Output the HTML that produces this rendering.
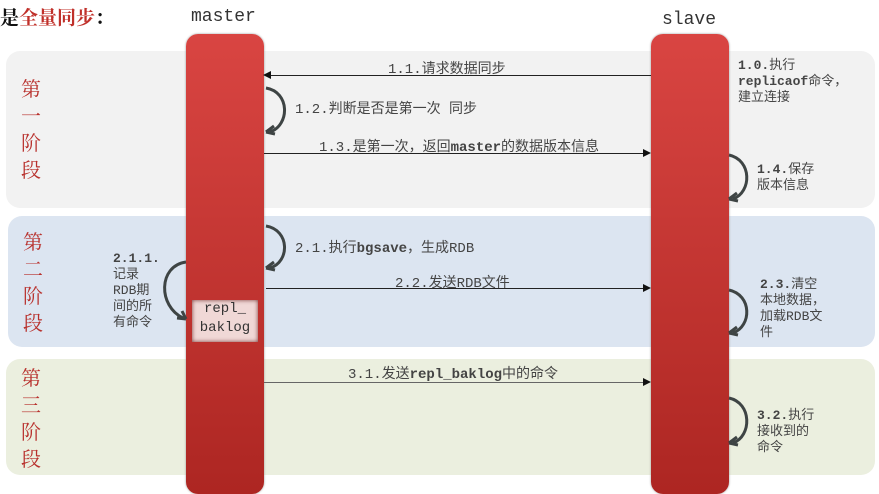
<!DOCTYPE html>
<html><head><meta charset="utf-8"><style>
body{margin:0;width:879px;height:482px;background:#fff;position:relative;overflow:hidden;font-family:"Liberation Mono","Noto Sans CJK SC",monospace;color:#444}
.a{position:absolute;white-space:nowrap}
.p{position:absolute;border-radius:14px}
.bar{position:absolute;top:34px;width:78px;height:460px;border-radius:12px;background:linear-gradient(#d94542,#ad2622);box-shadow:0 0 2px #999}
.st{position:absolute;color:#b8302c;font-family:"Liberation Serif","Noto Serif CJK SC",serif;font-size:20px;line-height:27px;width:24px;text-align:center}
.t{font-size:14px}
.s{font-size:13px;line-height:16px}
.ln{position:absolute;height:1px;background:#222}
</style></head><body>
<div class="a" style="left:0;top:3px;font-family:'Liberation Serif','Noto Serif CJK SC',serif;font-size:19px;font-weight:bold;color:#111">是<span style="color:#c0302a">全量同步</span>：</div>
<div class="a" style="left:191px;top:7px;font-size:18px;color:#333">master</div>
<div class="a" style="left:662px;top:10px;font-size:18px;color:#333">slave</div>
<div class="p" style="left:6px;top:51px;width:869px;height:157px;background:#f2f2f2"></div>
<div class="p" style="left:8px;top:216px;width:867px;height:131px;background:#dce5f1"></div>
<div class="p" style="left:6px;top:359px;width:869px;height:116px;background:#ebefdf"></div>
<div class="st" style="left:19px;top:77px">第<br>一<br>阶<br>段</div>
<div class="st" style="left:21px;top:230px">第<br>二<br>阶<br>段</div>
<div class="st" style="left:19px;top:366px">第<br>三<br>阶<br>段</div>
<div class="bar" style="left:186px"></div>
<div class="bar" style="left:651px"></div>
<div class="a" style="left:192px;top:300px;width:66px;height:42px;background:#f0d8d6;box-shadow:inset 0 0 4px #733;text-align:center;font-size:14px;line-height:19px;color:#333;padding-top:0">repl_<br>baklog</div>
<div class="ln" style="left:268px;top:75px;width:383px"></div>
<svg class="a" style="left:262px;top:70px" width="10" height="10"><path d="M1 5L9 1V9Z" fill="#111"/></svg>
<div class="ln" style="left:264px;top:153px;width:383px"></div>
<svg class="a" style="left:642px;top:148px" width="10" height="10"><path d="M9 5L1 1V9Z" fill="#111"/></svg>
<div class="ln" style="left:266px;top:288px;width:381px"></div>
<svg class="a" style="left:642px;top:283px" width="10" height="10"><path d="M9 5L1 1V9Z" fill="#111"/></svg>
<div class="ln" style="left:264px;top:382px;width:383px;background:#666"></div>
<svg class="a" style="left:642px;top:377px" width="10" height="10"><path d="M9 5L1 1V9Z" fill="#111"/></svg>
<div class="a t" style="left:388px;top:58px">1.1.请求数据同步</div>
<div class="a t" style="left:295px;top:98px">1.2.判断是否是第一次 同步</div>
<div class="a t" style="left:319px;top:136px">1.3.是第一次，返回<b>master</b>的数据版本信息</div>
<div class="a t" style="left:295px;top:237px">2.1.执行<b>bgsave</b>，生成RDB</div>
<div class="a t" style="left:395px;top:272px">2.2.发送RDB文件</div>
<div class="a t" style="left:348px;top:363px">3.1.发送<b>repl_baklog</b>中的命令</div>
<div class="a s" style="left:738px;top:58px"><b>1.0.</b>执行<br><b>replicaof</b>命令，<br>建立连接</div>
<div class="a s" style="left:757px;top:162px"><b>1.4.</b>保存<br>版本信息</div>
<div class="a s" style="left:760px;top:277px"><b>2.3.</b>清空<br>本地数据，<br>加载RDB文<br>件</div>
<div class="a s" style="left:757px;top:408px"><b>3.2.</b>执行<br>接收到的<br>命令</div>
<div class="a s" style="left:113px;top:251px"><b>2.1.1.</b><br>记录<br>RDB期<br>间的所<br>有命令</div>
<svg class="a" style="left:0;top:0" width="879" height="482" fill="none" stroke="#3e4444" stroke-width="3">
<path d="M266 88C290 92 290 125 270 132"/><path d="M266 132l8-6M266 132l9 2" />
<path d="M266 226C290 230 290 262 270 268"/><path d="M266 268l8-6M266 268l9 2"/>
<path d="M729 155C752 160 752 192 733 199"/><path d="M729 199l8-6M729 199l9 2"/>
<path d="M729 290C752 295 752 326 733 333"/><path d="M729 333l8-6M729 333l9 2"/>
<path d="M729 398C752 403 752 436 733 443"/><path d="M729 443l8-6M729 443l9 2"/>
<path d="M186 262C158 266 158 306 183 318"/><path d="M186 319l-9-1M186 319l-4-8"/>
</svg>
</body></html>
